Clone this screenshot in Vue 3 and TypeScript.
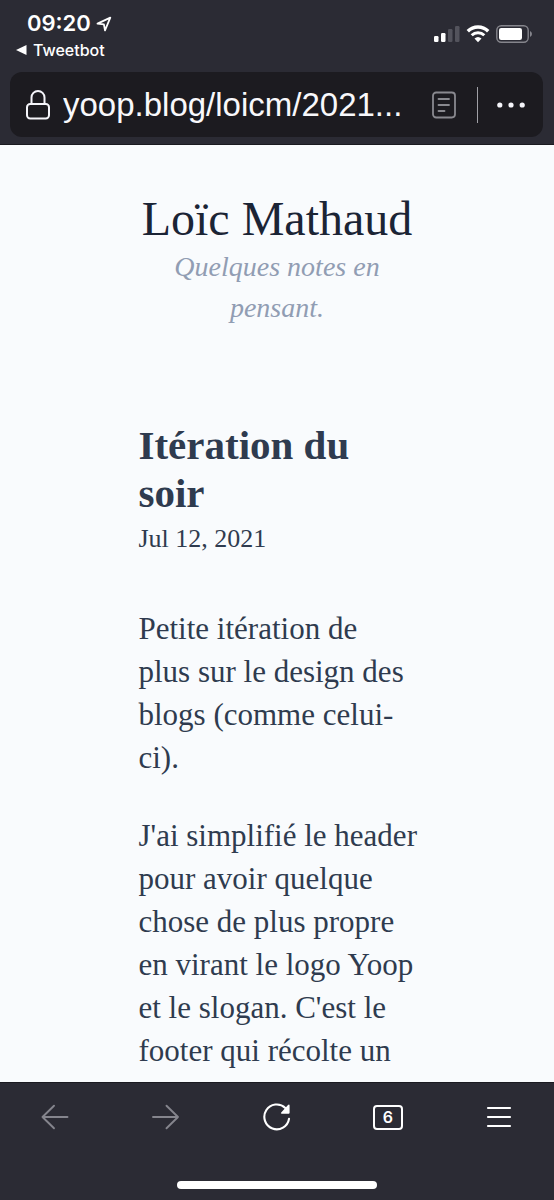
<script setup lang="ts">
import { ref } from 'vue'

const address = ref<string>('yoop.blog/loicm/2021...')
const tabCount = ref<number>(6)

const paragraphs: string[] = [
  'Petite itération de\nplus sur le design des\nblogs (comme celui-\nci).',
  "J'ai simplifié le header\npour avoir quelque\nchose de plus propre\nen virant le logo Yoop\net le slogan. C'est le\nfooter qui récolte un",
]

const signalBars = [
  { x: 0, height: 6, on: true },
  { x: 7, height: 9, on: true },
  { x: 14, height: 13, on: false },
  { x: 21, height: 16, on: false },
]
</script>

<template>
  <div class="screen">
    <header class="chrome">
      <div class="status">
        <div class="status-left">
          <div class="clock">
            <span>09:20</span>
            <svg width="16" height="16" viewBox="0 0 16 16" aria-hidden="true">
              <path d="M1.500 7.600 14.300 1.600 9 14.400 7.900 8.400Z" fill="none" stroke="#fff" stroke-width="1.800" stroke-linejoin="round" />
            </svg>
          </div>
          <a class="return" href="#">
            <svg width="11" height="10" viewBox="0 0 11 10" aria-hidden="true">
              <path d="M0 5 10.500 0V10Z" fill="#fff" />
            </svg>
            <span>Tweetbot</span>
          </a>
        </div>
        <div class="status-right">
          <svg width="26" height="18" viewBox="0 0 26 18" aria-label="Signal">
            <rect
              v-for="bar in signalBars"
              :key="bar.x"
              :x="bar.x"
              :y="17 - bar.height"
              width="4.500"
              :height="bar.height"
              rx="1.200"
              :fill="bar.on ? '#fff' : '#53535c'"
            />
          </svg>
          <svg width="24" height="18" viewBox="0 0 24 18" aria-label="Wi-Fi">
            <path d="M1.800 6.200A14.500 14.500 0 0 1 22.200 6.200" fill="none" stroke="#fff" stroke-width="3.400" />
            <path d="M5.700 10.300A9 9 0 0 1 18.300 10.300" fill="none" stroke="#fff" stroke-width="3" />
            <path d="M8.500 13.600Q12 10.600 15.500 13.600L12 17.200Z" fill="#fff" />
          </svg>
          <svg width="37" height="18" viewBox="0 0 37 18" aria-label="Batterie">
            <rect x="0.800" y="0.800" width="31.400" height="16.400" rx="4.500" fill="none" stroke="#85858c" stroke-width="1.400" />
            <rect x="3" y="3" width="23" height="12" rx="2.200" fill="#fff" />
            <path d="M34 6Q36 7 36 9T34 12Z" fill="#85858c" />
          </svg>
        </div>
      </div>

      <div class="address">
        <svg width="26" height="32" viewBox="0 0 26 32" fill="none" stroke="#f5f5fa" stroke-width="2" aria-hidden="true">
          <rect x="2" y="15" width="22" height="14.500" rx="3.200" />
          <path d="M6.500 15V8.500a6.500 6.500 0 0 1 13 0V15" />
        </svg>
        <input v-model="address" class="url" type="text" aria-label="Adresse" />
        <button class="reader" type="button" aria-label="Mode lecture">
          <svg width="24" height="28" viewBox="0 0 24 28" fill="none" stroke="#89898f" stroke-width="1.800" stroke-linecap="round">
            <rect x="1" y="1.500" width="22" height="25" rx="3.200" />
            <path d="M6.500 8H17M6.500 14H17M6.500 20H12.500" />
          </svg>
        </button>
        <span class="divider"></span>
        <button class="more" type="button" aria-label="Plus d'options">
          <svg width="28" height="6" viewBox="0 0 28 6" fill="#f5f5fa">
            <circle cx="2.800" cy="3" r="2.600" />
            <circle cx="14" cy="3" r="2.600" />
            <circle cx="25.200" cy="3" r="2.600" />
          </svg>
        </button>
      </div>
    </header>

    <main class="page">
      <div class="masthead">
        <h1>Loïc Mathaud</h1>
        <p>Quelques notes en pensant.</p>
      </div>
      <article class="post">
        <h2>Itération du soir</h2>
        <time datetime="2021-07-12">Jul 12, 2021</time>
        <div class="body">
          <p v-for="text in paragraphs" :key="text">{{ text }}</p>
        </div>
      </article>
    </main>

    <footer class="toolbar">
      <nav class="tools">
        <button type="button" aria-label="Page précédente">
          <svg width="28" height="28" viewBox="0 0 28 28" fill="none" stroke="#85858d" stroke-width="1.900" stroke-linecap="round" stroke-linejoin="round">
            <path d="M26.500 14H1.500M13 2.700 1.500 14 13 25.300" />
          </svg>
        </button>
        <button type="button" aria-label="Page suivante">
          <svg width="28" height="28" viewBox="0 0 28 28" fill="none" stroke="#85858d" stroke-width="1.900" stroke-linecap="round" stroke-linejoin="round">
            <path d="M1 14H26M14.500 2.700 26 14 14.500 25.300" />
          </svg>
        </button>
        <button type="button" aria-label="Actualiser">
          <svg width="28" height="28" viewBox="0 0 28 28">
            <path d="M26 15.800A12.400 12.400 0 1 1 22.300 4.900" fill="none" stroke="#fff" stroke-width="2.100" stroke-linecap="round" />
            <path d="M26.600 2.400V9.800Q26.600 10.800 25.600 10.800H18.700Q17.200 10.600 18.200 9.500L25 2Q26.400 1 26.600 2.400Z" fill="#fff" />
          </svg>
        </button>
        <button type="button" aria-label="Onglets">
          <span class="tabs">{{ tabCount }}</span>
        </button>
        <button type="button" aria-label="Menu">
          <svg width="26" height="28" viewBox="0 0 26 28" stroke="#fff" stroke-width="2.200" stroke-linecap="round">
            <path d="M2 5H24M2 14H24M2 23H24" />
          </svg>
        </button>
      </nav>
      <div class="home"></div>
    </footer>
  </div>
</template>

<style>
body {
  margin: 0;
  background: #f9fbfd;
}
</style>

<style scoped>
* {
  box-sizing: border-box;
}

.screen {
  display: flex;
  flex-direction: column;
  min-height: 100vh;
  background: #f9fbfd;
  font-family: Inter, "Liberation Sans", sans-serif;
}

button {
  display: flex;
  align-items: center;
  justify-content: center;
  padding: 0;
  border: 0;
  background: none;
  color: #fff;
  font-family: inherit;
}

svg {
  display: block;
  flex: none;
}

.chrome {
  padding: 10px 11px 7px 10px;
  border-bottom: 1px solid #1a1a20;
  background: #2b2b34;
  color: #fff;
}

.status {
  display: flex;
  justify-content: space-between;
  align-items: flex-start;
  height: 62px;
  padding: 0 10px 0 6px;
}

.clock {
  display: flex;
  align-items: center;
  gap: 5px;
  padding-left: 11px;
  font-size: 22px;
  font-weight: 600;
  line-height: 27px;
}

.return {
  display: flex;
  align-items: center;
  gap: 6px;
  margin-top: 3px;
  color: #fff;
  font-size: 16px;
  font-weight: 500;
  line-height: 20px;
  text-decoration: none;
}

.status-right {
  display: flex;
  align-items: center;
  gap: 6px;
  padding-top: 15px;
}

.address {
  display: flex;
  align-items: center;
  height: 65px;
  padding: 1px 18px 0 15px;
  border-radius: 12px;
  background: #1c1b20;
}

.url {
  flex: 1;
  min-width: 0;
  height: 44px;
  margin-left: 12px;
  padding: 0;
  border: 0;
  outline: 0;
  background: none;
  color: #f8f8fb;
  font-family: "Liberation Sans", Arial, sans-serif;
  font-size: 33px;
  line-height: 44px;
}

.reader {
  margin-left: 12px;
}

.divider {
  width: 1px;
  height: 36px;
  margin: 0 19px 0 21px;
  background: #a0a0a6;
}

.page {
  flex: 1;
  padding: 47px 25% 10px;
  color: #2f3b4f;
  font-family: "Liberation Serif", serif;
}

.masthead {
  text-align: center;
}

.masthead h1 {
  margin: 0;
  color: #1b2435;
  font-size: 48px;
  font-weight: 400;
  line-height: 54px;
}

.masthead p {
  margin: 0;
  color: #919db3;
  font-size: 28px;
  font-style: italic;
  line-height: 41px;
}

.post {
  margin-top: 93px;
}

.post h2 {
  margin: 0;
  font-size: 41px;
  font-weight: 700;
  line-height: 48px;
}

.post time {
  display: block;
  font-size: 26px;
  line-height: 43px;
}

.body {
  display: flex;
  flex-direction: column;
  gap: 35px;
  margin-top: 47px;
}

.body p {
  margin: 0 -8px 0 0;
  font-size: 31px;
  line-height: 43px;
  white-space: pre-line;
}

.toolbar {
  padding: 12px 0;
  border-top: 1px solid #1a1a20;
  background: #2b2b34;
}

.tools {
  display: grid;
  grid-template-columns: repeat(5, 1fr);
}

.tools button {
  height: 44px;
}

.tabs {
  width: 30px;
  height: 25px;
  border: 2px solid #fff;
  border-radius: 4px;
  font-size: 16px;
  font-weight: 600;
  line-height: 21px;
}

.home {
  width: 36%;
  height: 8px;
  margin: 42px auto 0;
  border-radius: 4px;
  background: #fff;
}
</style>
